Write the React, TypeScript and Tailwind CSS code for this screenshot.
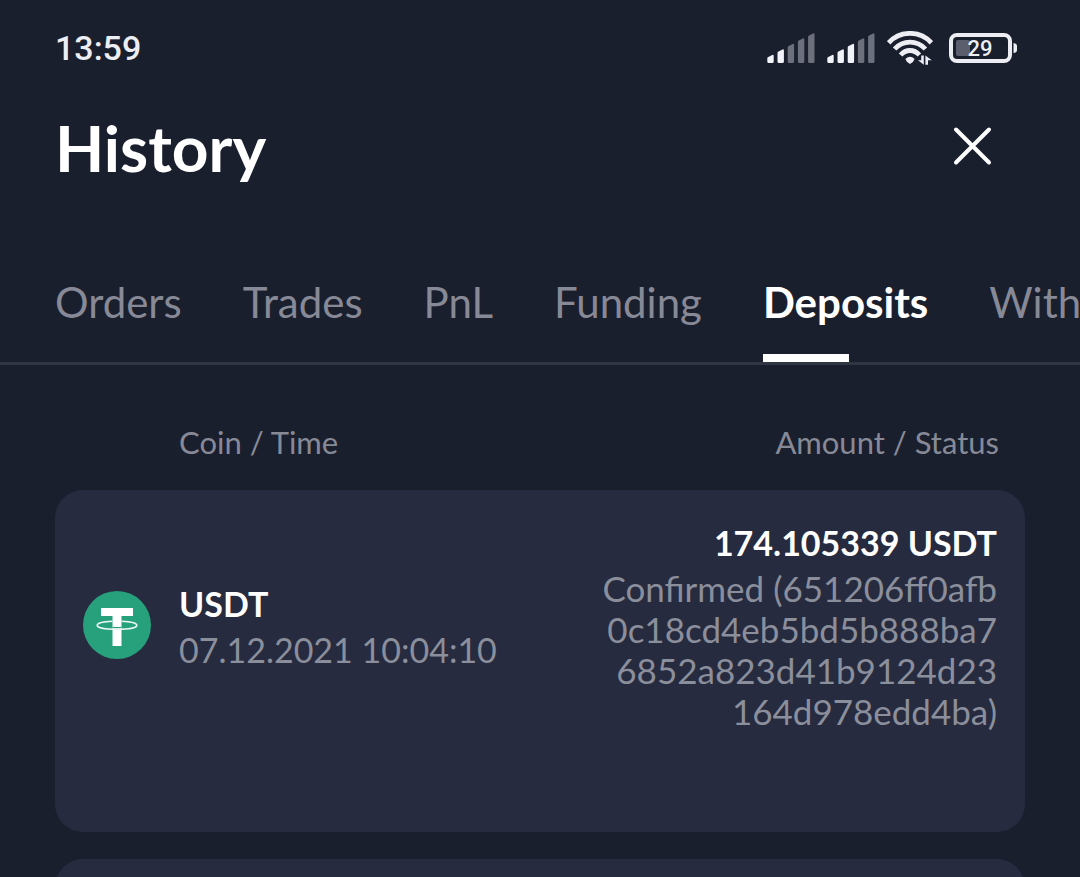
import { ReactNode } from "react";
import clsx from "clsx";

const TABS = ["Orders", "Trades", "PnL", "Funding", "Deposits", "Withdrawals"];

interface Deposit {
    coin: string;
    time: string;
    amount: string;
    status: string[];
}

const DEPOSIT: Deposit = {
    coin: "USDT",
    time: "07.12.2021 10:04:10",
    amount: "174.105339 USDT",
    status: ["Confirmed (651206ff0afb", "0c18cd4eb5bd5b888ba7", "6852a823d41b9124d23", "164d978edd4ba)"],
};

function SignalIcon({ level }: { level: number }) {
    const tops = [21.5, 16, 10.5, 5, 0];
    return (
        <svg className="w-12 h-[30px]" viewBox="0 0 48 30" aria-hidden="true">
            {tops.map((top, i) => {
                const x = i * 10.2 + 0.3;
                return (
                    <path
                        key={top}
                        d={`M${x + 1} ${top + 2.6} L${x + 5} ${top + 0.4} Q${x + 6.4} ${top} ${x + 6.4} ${top + 1.4} V28.5 Q${x + 6.4} 30 ${x + 5} 30 H${x + 1.4} Q${x} 30 ${x} 28.5 V${top + 4} Q${x} ${top + 3.1} ${x + 1} ${top + 2.6} Z`}
                        fill={i < level ? "#f1f3f8" : "#6c707d"}
                    />
                );
            })}
        </svg>
    );
}

function WifiIcon() {
    return (
        <svg className="w-[46px] h-[34px]" viewBox="0 0 46 34" fill="none" aria-hidden="true">
            <g stroke="#eceef4" strokeWidth="4.8">
                <path d="M1.6 11.8 C13 -0.8 33 -0.8 44.4 11.8" />
                <path d="M7.6 18 C16 8.8 30 8.8 38.4 18" />
                <path d="M13.6 24 C19 18 27 18 32.4 24" />
            </g>
            <path d="M18.4 28 Q23 23.4 27.6 28 Q27 30.6 23 33 Q19 30.6 18.4 28Z" fill="#eceef4" />
            <path d="M34.2 24.6 H36.8 V33.8 L31 29.2 H34.2Z M38.4 33.8 V24.4 L44.8 29.2 H41 V33.8Z" fill="#eceef4" />
        </svg>
    );
}

function BatteryIcon({ percent }: { percent: number }) {
    return (
        <svg className="w-[68px] h-[30px]" viewBox="0 0 68 30" aria-label={`Battery ${percent}%`}>
            <rect x="2" y="2" width="59" height="26" rx="6" fill="none" stroke="#eceef4" strokeWidth="4" />
            <rect x="7" y="7" width="14" height="16" rx="2" fill="#5b5f6d" />
            <path d="M64.5 10 Q68 10.5 68 13 V17 Q68 19.5 64.5 20Z" fill="#eceef4" />
            <text x="31" y="23" textAnchor="middle" fontSize="22" fontWeight="500" fill="#eceef4" className="font-['Roboto',sans-serif]">
                {percent}
            </text>
        </svg>
    );
}

function TetherIcon() {
    return (
        <svg className="w-[68px] h-[68px] shrink-0" viewBox="0 0 68 68" aria-hidden="true">
            <circle cx="34" cy="34" r="34" fill="#27a17b" />
            <path d="M18 17 H50 V25 H38.5 V55 H29.5 V25 H18Z" fill="#fff" />
            <path d="M29.5 36.3 Q34 36.8 38.5 36.3" fill="none" stroke="#27a17b" strokeWidth="1.2" />
            <path
                d="M29.5 30.2 C20 30.5 14.2 32.2 14.2 34.2 C14.2 36.7 22.5 38.3 34 38.3 S53.8 36.7 53.8 34.2 C53.8 32.2 48 30.5 38.5 30.2"
                fill="none"
                stroke="#e8f6f1"
                strokeWidth="1.6"
            />
        </svg>
    );
}

function StatusBar() {
    return (
        <div className="flex shrink-0 items-center justify-between pl-[55px] pr-[63px] pt-7">
            <time className="font-['Roboto',sans-serif] font-medium text-[34px] leading-10 text-[#eceef4]">13:59</time>
            <div className="flex items-center">
                <SignalIcon level={2} />
                <div className="ml-3">
                    <SignalIcon level={3} />
                </div>
                <div className="ml-3">
                    <WifiIcon />
                </div>
                <div className="ml-4">
                    <BatteryIcon percent={29} />
                </div>
            </div>
        </div>
    );
}

function Card({ children }: { children?: ReactNode }) {
    return <li className="flex min-h-[342px] shrink-0 rounded-[28px] bg-[#262b3f] px-7 py-8">{children}</li>;
}

function DepositCard({ deposit }: { deposit: Deposit }) {
    return (
        <Card>
            <div className="flex flex-1 items-center gap-7 self-start pt-[55px]">
                <TetherIcon />
                <div className="pt-1 text-[34px]">
                    <p className="font-bold leading-[46px] text-white">{deposit.coin}</p>
                    <p className="leading-[46px] text-[#8b8e9b]">{deposit.time}</p>
                </div>
            </div>
            <div className="text-right text-[34px]">
                <p className="font-bold leading-[42px] text-white">{deposit.amount}</p>
                <p className="pt-1 text-[35px] leading-[41px] text-[#8b8e9b]">
                    {deposit.status.map((line) => (
                        <span key={line} className="block">{line}</span>
                    ))}
                </p>
            </div>
        </Card>
    );
}

export default function App() {
    return (
        <div className="flex h-screen flex-col overflow-hidden bg-[#1a1f2e] font-['Lato',sans-serif]">
            <StatusBar />
            <header className="flex shrink-0 items-center justify-between pl-[55px] pr-[88px] pt-11">
                <h1 className="text-[64px] font-bold leading-[72px] text-white">History</h1>
                <button type="button" aria-label="Close" className="pb-1">
                    <svg className="size-10" viewBox="0 0 40 40" fill="none" stroke="#fff" strokeWidth="4" strokeLinecap="round">
                        <path d="M4 3.5 L37 36.5 M37 3.5 L4 36.5" />
                    </svg>
                </button>
            </header>
            <nav className="flex shrink-0 items-start gap-[61px] overflow-hidden border-b-[3px] border-[#303544] pl-[55px] pt-[92px]">
                {TABS.map((tab) => {
                    const active = tab === "Deposits";
                    return (
                        <button
                            key={tab}
                            type="button"
                            className={clsx(
                                "flex shrink-0 flex-col gap-[26px] text-[42px] leading-[52px]",
                                active ? "font-bold text-white" : "text-[#878a96]"
                            )}
                        >
                            {tab}
                            {active && <span className="h-2 w-[86px] bg-white" />}
                        </button>
                    );
                })}
            </nav>
            <main className="flex shrink-0 flex-col px-[55px]">
                <div className="flex justify-between pb-7 pl-[124px] pr-[26px] pt-[57px] text-[31px] leading-10 text-[#878a96]">
                    <span>Coin / Time</span>
                    <span>Amount / Status</span>
                </div>
                <ul className="flex flex-col gap-[27px]">
                    <DepositCard deposit={DEPOSIT} />
                    <Card />
                </ul>
            </main>
        </div>
    );
}
